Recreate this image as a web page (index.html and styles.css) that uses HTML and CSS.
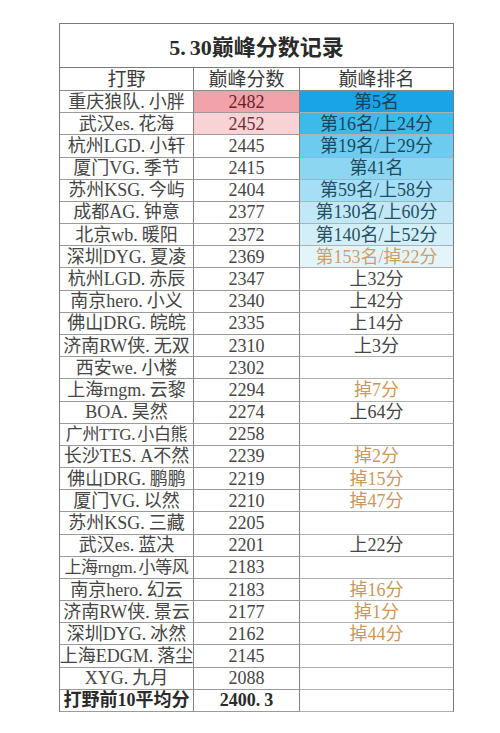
FILE: index.html
```html
<!DOCTYPE html>
<html lang="zh-CN">
<head>
<meta charset="utf-8">
<title>5.30巅峰分数记录</title>
<link rel="stylesheet" href="styles.css">
</head>
<body>
<div class="sheet">
  <div class="cell title">5<span class="dot">.</span>30巅峰分数记录</div>
  <div class="cell head">打野</div><div class="cell head">巅峰分数</div><div class="cell head last">巅峰排名</div>

  <div class="cell name">重庆狼队<span class="dot">.</span>小胖</div><div class="cell num pink1">2482</div><div class="cell rank last blue1">第5名</div>
  <div class="cell name">武汉es<span class="dot">.</span>花海</div><div class="cell num pink2">2452</div><div class="cell rank last blue2">第16名/上24分</div>
  <div class="cell name">杭州LGD<span class="dot">.</span>小轩</div><div class="cell num">2445</div><div class="cell rank last blue3">第19名/上29分</div>
  <div class="cell name">厦门VG<span class="dot">.</span>季节</div><div class="cell num">2415</div><div class="cell rank last blue4">第41名</div>
  <div class="cell name">苏州KSG<span class="dot">.</span>今屿</div><div class="cell num">2404</div><div class="cell rank last blue5">第59名/上58分</div>
  <div class="cell name">成都AG<span class="dot">.</span>钟意</div><div class="cell num">2377</div><div class="cell rank last blue6">第130名/上60分</div>
  <div class="cell name">北京wb<span class="dot">.</span>暖阳</div><div class="cell num">2372</div><div class="cell rank last blue7">第140名/上52分</div>
  <div class="cell name">深圳DYG<span class="dot">.</span>夏凌</div><div class="cell num">2369</div><div class="cell rank last blue8 down">第153名/掉22分</div>
  <div class="cell name">杭州LGD<span class="dot">.</span>赤辰</div><div class="cell num">2347</div><div class="cell rank last">上32分</div>
  <div class="cell name">南京hero<span class="dot">.</span>小义</div><div class="cell num">2340</div><div class="cell rank last">上42分</div>
  <div class="cell name">佛山DRG<span class="dot">.</span>皖皖</div><div class="cell num">2335</div><div class="cell rank last">上14分</div>
  <div class="cell name">济南RW侠<span class="dot">.</span>无双</div><div class="cell num">2310</div><div class="cell rank last">上3分</div>
  <div class="cell name">西安we<span class="dot">.</span>小楼</div><div class="cell num">2302</div><div class="cell rank last"></div>
  <div class="cell name">上海rngm<span class="dot">.</span>云黎</div><div class="cell num">2294</div><div class="cell rank last down">掉7分</div>
  <div class="cell name">BOA<span class="dot">.</span>昊然</div><div class="cell num">2274</div><div class="cell rank last">上64分</div>
  <div class="cell name tight">广州TTG<span class="dot">.</span>小白熊</div><div class="cell num">2258</div><div class="cell rank last"></div>
  <div class="cell name">长沙TES<span class="dot">.</span>A不然</div><div class="cell num">2239</div><div class="cell rank last down">掉2分</div>
  <div class="cell name">佛山DRG<span class="dot">.</span>鹏鹏</div><div class="cell num">2219</div><div class="cell rank last down">掉15分</div>
  <div class="cell name">厦门VG<span class="dot">.</span>以然</div><div class="cell num">2210</div><div class="cell rank last down">掉47分</div>
  <div class="cell name">苏州KSG<span class="dot">.</span>三藏</div><div class="cell num">2205</div><div class="cell rank last"></div>
  <div class="cell name">武汉es<span class="dot">.</span>蓝决</div><div class="cell num">2201</div><div class="cell rank last">上22分</div>
  <div class="cell name tight">上海rngm<span class="dot">.</span>小等风</div><div class="cell num">2183</div><div class="cell rank last"></div>
  <div class="cell name">南京hero<span class="dot">.</span>幻云</div><div class="cell num">2183</div><div class="cell rank last down">掉16分</div>
  <div class="cell name">济南RW侠<span class="dot">.</span>景云</div><div class="cell num">2177</div><div class="cell rank last down">掉1分</div>
  <div class="cell name">深圳DYG<span class="dot">.</span>冰然</div><div class="cell num">2162</div><div class="cell rank last down">掉44分</div>
  <div class="cell name">上海EDGM<span class="dot">.</span>落尘</div><div class="cell num">2145</div><div class="cell rank last"></div>
  <div class="cell name">XYG<span class="dot">.</span>九月</div><div class="cell num">2088</div><div class="cell rank last"></div>
  <div class="cell name avg">打野前10平均分</div><div class="cell num avg">2400<span class="dot">.</span>3</div><div class="cell rank last"></div>
</div>
</body>
</html>
```

FILE: styles.css
```css
html, body {
  margin: 0;
  padding: 0;
  background: #ffffff;
}
body {
  padding: 23px 0 0 59px;
  font-family: "Liberation Serif", "Noto Sans CJK SC", serif;
  color: #454545;
}
.sheet {
  display: grid;
  grid-template-columns: 134px 106px 154px;
  grid-template-rows: 44px 23px repeat(28, 1fr);
  width: 395px;
  height: 689px;
  box-sizing: border-box;
  border-top: 1px solid #7a7a7a;
  border-left: 1px solid #7a7a7a;
}
.cell {
  box-sizing: border-box;
  border-right: 1px solid #808080;
  border-bottom: 1px solid #9a9a9a;
  display: flex;
  align-items: center;
  justify-content: center;
  white-space: nowrap;
  overflow: hidden;
  font-size: 18px;
  line-height: 1;
  background: #ffffff;
}
.dot {
  padding-right: 4px;
}
.tight {
  font-size: 17px;
  letter-spacing: -0.3px;
}
.tight .dot {
  padding-right: 2px;
}
.last {
  border-right-color: #7a7a7a;
}
.title {
  grid-column: 1 / 4;
  font-size: 22px;
  font-weight: bold;
  color: #2a2a2a;
  border-right-color: #7a7a7a;
  border-bottom-color: #7a7a7a;
  padding-top: 4px;
}
.head {
  font-size: 19px;
  color: #3a3a3a;
  border-bottom-color: #8a8a8a;
}
.name {
  color: #454545;
}
.num {
  color: #454545;
}
.rank {
  color: #454545;
  border-bottom-color: #b0b0b0;
}
.down {
  color: #c9995c;
}
.pink1 { background: #f2a2aa; color: #6a2228; }
.pink2 { background: #f9d2d6; color: #6e3338; }
.blue1 { background: #18a4e6; color: #16435a; }
.blue2 { background: #3cbaea; color: #17465c; }
.blue3 { background: #6ccbef; color: #1a4a5e; }
.blue4 { background: #8dd6f2; color: #1d4c60; }
.blue5 { background: #a6dff5; color: #204e62; }
.blue6 { background: #c0e8f7; color: #244f62; }
.blue7 { background: #d2eff9; color: #275163; }
.blue8 { background: #e3f5fb; color: #cf9f66; }
.avg {
  font-weight: bold;
  color: #2a2a2a;
}
```
